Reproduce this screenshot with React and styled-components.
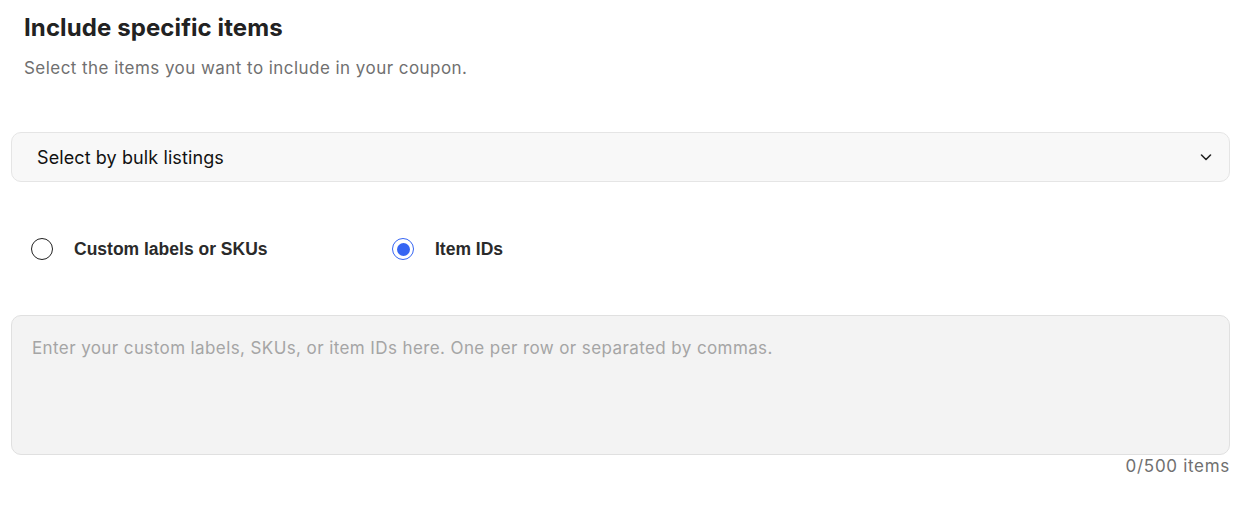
import styled, { createGlobalStyle } from 'styled-components';

const GlobalStyle = createGlobalStyle`
  html, body {
    margin: 0;
    padding: 0;
    background: #fff;
  }
  body {
    font-family: Inter, "Noto Sans", sans-serif;
    color: #191919;
  }
`;

const Page = styled.div`
  width: 1219px;
  padding: 0 19px 0 11px;
  display: flex;
  flex-direction: column;
`;

const Header = styled.div`
  padding: 12px 0 0 13px;
`;

const Title = styled.h2`
  margin: 0;
  font-size: 24px;
  line-height: 32px;
  font-weight: 700;
  color: #222;
  letter-spacing: 0.1px;
`;

const Subtitle = styled.p`
  margin: 13px 0 0;
  font-size: 17px;
  line-height: 22px;
  letter-spacing: 0.45px;
  color: #707070;
`;

const Dropdown = styled.button`
  margin-top: 53px;
  height: 50px;
  box-sizing: border-box;
  display: flex;
  align-items: center;
  justify-content: space-between;
  padding: 0 16px 0 25px;
  background: #f8f8f8;
  border: 1px solid #e5e5e5;
  border-radius: 10px;
  font-family: Inter, "Noto Sans", sans-serif;
  font-size: 18px;
  letter-spacing: 0.1px;
  color: #111;
  cursor: pointer;
`;

const RadioRow = styled.div`
  display: flex;
  align-items: center;
  margin-top: 56px;
  padding-left: 20px;
`;

const RadioOption = styled.label`
  display: flex;
  align-items: center;
  gap: 21px;
  width: 361px;
  cursor: pointer;
`;

const RadioCircle = styled.span`
  width: 22px;
  height: 22px;
  box-sizing: border-box;
  border-radius: 50%;
  border: ${(p) => (p.$checked ? '1.5px solid #3665f3' : '1.5px solid #222')};
  display: flex;
  align-items: center;
  justify-content: center;

  &::after {
    content: '';
    display: ${(p) => (p.$checked ? 'block' : 'none')};
    width: 13px;
    height: 13px;
    border-radius: 50%;
    background: #3665f3;
  }
`;

const RadioLabel = styled.span`
  font-family: "Liberation Sans", Arial, sans-serif;
  font-weight: 700;
  font-size: 17.5px;
  color: #2a2a2a;
`;

const TextArea = styled.textarea`
  margin-top: 55px;
  height: 140px;
  box-sizing: border-box;
  padding: 20px 20px;
  background: #f3f3f3;
  border: 1px solid #e0e0e0;
  border-radius: 10px;
  resize: none;
  font-family: Inter, "Noto Sans", sans-serif;
  font-size: 17px;
  line-height: 24px;
  letter-spacing: 0.4px;
  color: #111;
  outline: none;

  &::placeholder {
    color: #a5a5a5;
  }
`;

const Counter = styled.div`
  align-self: flex-end;
  font-size: 17px;
  line-height: 22px;
  letter-spacing: 0.7px;
  color: #707070;
`;

function Chevron() {
  return (
    <svg width="14" height="14" viewBox="0 0 14 14" fill="none">
      <path d="M2.5 5l4.5 4.5L11.5 5" stroke="#222" strokeWidth="1.6" strokeLinecap="round" strokeLinejoin="round" />
    </svg>
  );
}

export default function App() {
  return (
    <Page>
      <GlobalStyle />
      <Header>
        <Title>Include specific items</Title>
        <Subtitle>Select the items you want to include in your coupon.</Subtitle>
      </Header>
      <Dropdown type="button">
        <span>Select by bulk listings</span>
        <Chevron />
      </Dropdown>
      <RadioRow>
        <RadioOption>
          <RadioCircle />
          <RadioLabel>Custom labels or SKUs</RadioLabel>
        </RadioOption>
        <RadioOption>
          <RadioCircle $checked />
          <RadioLabel>Item IDs</RadioLabel>
        </RadioOption>
      </RadioRow>
      <TextArea placeholder="Enter your custom labels, SKUs, or item IDs here. One per row or separated by commas." />
      <Counter>0/500 items</Counter>
    </Page>
  );
}
